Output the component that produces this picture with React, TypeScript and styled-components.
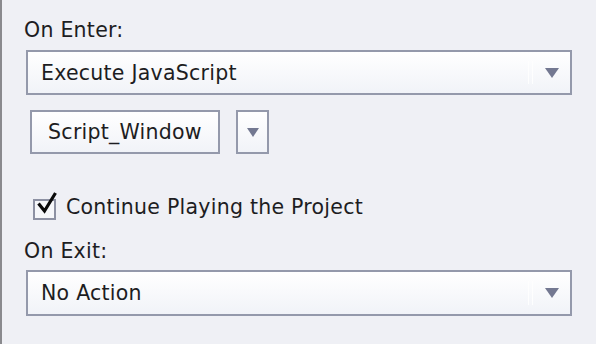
import React from "react";
import styled, { createGlobalStyle } from "styled-components";

const Global = createGlobalStyle`
  html, body { margin: 0; padding: 0; background: #eff0f5; }
  body { font-family: "DejaVu Sans", "Liberation Sans", sans-serif; }
`;

const Panel = styled.div`
  box-sizing: border-box;
  width: 596px;
  height: 344px;
  border-left: 2px solid #8a8a8e;
  background: #eff0f5;
  padding: 18px 0 0 22px;
  display: flex;
  flex-direction: column;
  color: #1d1d22;
  font-size: 20.5px;
  letter-spacing: 0.25px;
  line-height: 24px;
`;

const Label = styled.div<{ $mt?: number }>`
  margin-top: ${(p) => p.$mt ?? 0}px;
  height: 24px;
`;

const Select = styled.div<{ $mt: number; $h: number }>`
  box-sizing: border-box;
  margin: ${(p) => p.$mt}px 0 0 2px;
  width: 546px;
  height: ${(p) => p.$h}px;
  border: 2px solid #9499ab;
  background: linear-gradient(#ffffff, #f1f3f8);
  display: flex;
  align-items: center;
  padding-left: 13px;
`;

const SelectText = styled.span`
  flex: 1;
`;

const Divider = styled.span`
  width: 5px;
  align-self: stretch;
  margin: 9px 0 9px;
  border-left: 1px solid #ffffff;
  border-right: 1px solid #ffffff;
  box-sizing: border-box;
  opacity: 0.9;
`;

const ArrowZone = styled.span`
  width: 37px;
  display: flex;
  justify-content: center;
  align-items: center;
`;

const Row = styled.div`
  margin: 15px 0 0 6px;
  display: flex;
  gap: 16px;
`;

const Button = styled.div<{ $w: number }>`
  box-sizing: border-box;
  width: ${(p) => p.$w}px;
  height: 44px;
  border: 2px solid #9499ab;
  background: linear-gradient(#ffffff, #f1f3f8);
  display: flex;
  align-items: center;
  justify-content: center;
`;

const CheckRow = styled.div`
  margin: 41px 0 0 9px;
  display: flex;
  align-items: center;
  gap: 10px;
  height: 24px;
`;

const CheckBox = styled.span`
  position: relative;
  box-sizing: border-box;
  width: 23px;
  height: 21px;
  border: 2px solid #8d91a3;
  background: #f6f7fa;
  margin-top: 4px;
`;

const CheckMark = styled.svg`
  position: absolute;
  left: 2px;
  top: -7px;
  overflow: visible;
`;

const Arrow = ({ w, h }: { w: number; h: number }) => (
  <svg width={w} height={h} viewBox={`0 0 ${w} ${h}`}>
    <polygon points={`0,0 ${w},0 ${w / 2},${h}`} fill="#737891" />
  </svg>
);

export default function App() {
  return (
    <>
      <Global />
      <Panel>
        <Label>On Enter:</Label>
        <Select $mt={8} $h={45}>
          <SelectText>Execute JavaScript</SelectText>
          <Divider />
          <ArrowZone>
            <Arrow w={14} h={10} />
          </ArrowZone>
        </Select>
        <Row>
          <Button $w={190}>
            <span>Script_Window</span>
          </Button>
          <Button $w={33}>
            <Arrow w={12} h={9} />
          </Button>
        </Row>
        <CheckRow>
          <CheckBox>
            <CheckMark width="20" height="20" viewBox="0 0 20 20">
              <polyline
                points="1.5,9.5 7.5,17 18.5,-1"
                fill="none"
                stroke="#0a0a0a"
                strokeWidth="3.2"
              />
            </CheckMark>
          </CheckBox>
          <span>Continue Playing the Project</span>
        </CheckRow>
        <Label $mt={20}>On Exit:</Label>
        <Select $mt={7} $h={46}>
          <SelectText>No Action</SelectText>
          <Divider />
          <ArrowZone>
            <Arrow w={14} h={10} />
          </ArrowZone>
        </Select>
      </Panel>
    </>
  );
}
